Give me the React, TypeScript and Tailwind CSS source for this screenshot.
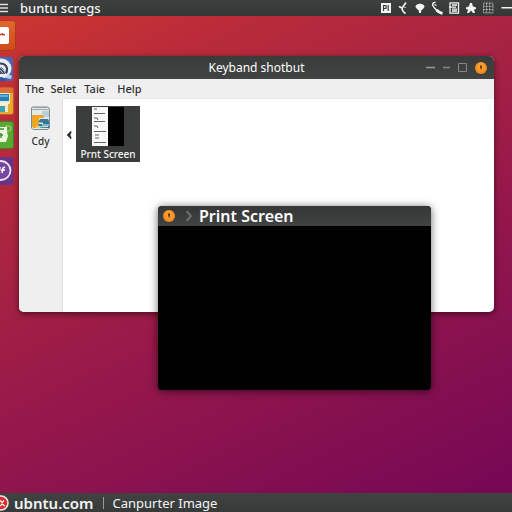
import React from 'react';

function StatusIcons() {
  return (
    <div className="flex items-center gap-[7px] text-gray-100">
      <svg viewBox="0 0 10 10" className="h-[10px] w-[10px]" fill="currentColor">
        <path d="M0 0h10v10H0z" />
        <path d="M2.5 8V2.5h2.5v3H3M7.2 2v6" stroke="#3a3c3b" strokeWidth="1.2" fill="none" />
      </svg>
      <svg viewBox="0 0 10 10" className="h-[10px] w-[10px] overflow-visible" fill="none" stroke="currentColor">
        <path d="M8 -.5 4.5 4.5M1 3.5l3 1.5c0 2 .5 3.500 3.500 5.500" strokeWidth="1.6" />
        <path d="M6 4.500h2" strokeWidth="1" opacity=".6" />
      </svg>
      <svg viewBox="0 0 10 10" className="h-[10px] w-[10px]" fill="currentColor">
        <path d="M.3 3.500Q1 1 3.500 1Q5 .200 6.500 1Q9 1 9.700 3.500Q8.500 6 6.500 7L5.800 10H4.200L3.500 7Q1.500 6 .3 3.500z" />
      </svg>
      <svg viewBox="0 0 10 10" className="h-[10px] w-[10px] overflow-visible" fill="none" stroke="currentColor">
        <path d="M3.500 -.8Q0 -.5 .8 2.500Q2.500 5.500 5 7.500" strokeWidth="1.500" />
        <path d="M4.500 7Q7 9.500 10.500 10.500" strokeWidth="3" />
        <path d="M2.500 1.500l2 1" strokeWidth="1.200" />
      </svg>
      <svg viewBox="0 0 10 10" className="h-[10px] w-[10px] overflow-visible" fill="none" stroke="currentColor">
        <path d="M1 -.2h8.500v10.400H1zM0 4.200h7M3 2h5M3 6.200h5M3 8h5" strokeWidth="1.300" />
      </svg>
      <svg viewBox="0 0 10 10" className="h-[10px] w-[10px]" fill="currentColor">
        <path d="M4 0h2l.8 3.300L10 4.500v1.500L8 6.500 9 10H7L5 7.500 3 10H1l1-3.500L0 6V4.500l3-1.200z" />
      </svg>
      <svg viewBox="0 0 10 10" className="h-[10px] w-[10px] overflow-visible" fill="none" stroke="currentColor" opacity=".6">
        <path d="M.5 0h9.500v10H.5zM.5 3.300H10M.5 6.600H10M3.500 0v10M6.700 0v10" strokeWidth=".9" strokeDasharray="2 .6" />
      </svg>
      <svg viewBox="0 0 12 10" className="h-[10px] w-[12px]" fill="currentColor">
        <path d="M1.500 4H12v1.500H1.500z" />
      </svg>
    </div>
  );
}

function Launcher() {
  return (
    <nav aria-label="Launcher" className="flex w-4 flex-col items-start gap-[6px] pt-1">
      <button aria-label="Files" className="h-[31px] w-4">
        <svg viewBox="0 0 16 31" className="h-full w-full">
          <defs>
            <linearGradient id="files" x2="0" y2="1">
              <stop stopColor="#e2652f" />
              <stop offset="1" stopColor="#cf4c17" />
            </linearGradient>
          </defs>
          <rect x="-16" y=".5" width="31.500" height="30" rx="3" fill="url(#files)" stroke="#a63c1c" />
          <path d="M0 7h7q2 0 2 2v13q0 2-2 2H0z" fill="#fff" />
          <path d="M0 14.500h2.500V13M2 14.800h3" stroke="#d0472b" strokeWidth="1.500" fill="none" />
        </svg>
      </button>
      <button aria-label="Browser" className="h-6 w-[14px]">
        <svg viewBox="0 1 14 24" className="h-full w-full">
          <rect x="-10" y="1" width="23" height="24" rx="2" fill="#4668b4" />
          <circle cx="1.500" cy="12.500" r="10" fill="#e8edf5" />
          <path d="M0 7.500q6 0 7 5 0 3-1 5" fill="none" stroke="#39445a" strokeWidth="2.200" />
          <path d="M0 11q4 0 5 7H0z" fill="#46536b" />
          <path d="M0 14l3 3M0 11l4 4" stroke="#a9b6cb" />
          <path d="M8 18l4 2-1 3-5-1z" fill="#c1d0e8" />
          <path d="M0 21q5 0 7 4H0z" fill="#3155a6" />
        </svg>
      </button>
      <button aria-label="Software" className="h-7 w-[14px]">
        <svg viewBox="0 0 14 28" className="h-full w-full">
          <rect x="-10" y=".5" width="23.500" height="27" rx="2.500" fill="#e7aa2c" stroke="#bd602b" />
          <path d="M0 1h13v5H0z" fill="#de6d35" />
          <path d="M0 6h10v11H8v8H0z" fill="#eee8c9" />
          <path d="M0 7h9v7H0z" fill="#2380b8" />
          <path d="M0 8h8v2H0z" fill="#60b4d5" />
          <path d="M0 16h8v2H0z" fill="#f6f3e2" />
          <path d="M0 19h5v6H0z" fill="#42a4ab" />
        </svg>
      </button>
      <button aria-label="Recycle" className="h-7 w-[14px]">
        <svg viewBox="0 0 14 28" className="h-full w-full">
          <rect x="-10" y=".5" width="23.500" height="27" rx="2.500" fill="#58a832" stroke="#398323" />
          <path d="M0 6h5l2-1v6l1 4-2 6H0z" fill="#edf5df" />
          <path d="M0 8h4M0 14h3M1 12v5" stroke="#448e38" strokeWidth="1.500" fill="none" />
          <path d="M6 5h4q2 2 0 5H7" stroke="#a2d482" fill="none" />
        </svg>
      </button>
      <button aria-label="Messages" className="mt-[2px] h-7 w-[14px]">
        <svg viewBox="0 0 14 28" className="h-full w-full">
          <rect x="-10" width="23.500" height="28" rx="2" fill="#693486" />
          <circle cx="1" cy="13.500" r="9.500" fill="#7746a0" stroke="#eee5f4" strokeWidth="1.800" />
          <path d="M0 10l-1 7M2 16l1-5 2-1M1 13h4" stroke="#fff" strokeWidth="1.500" fill="none" />
        </svg>
      </button>
    </nav>
  );
}

function FolderIcon() {
  return (
    <svg viewBox="0 0 19 24" className="h-6 w-[19px]">
      <path d="M1 1h16l1.500 2v19L17 23.500H2L.5 22V3z" fill="#e3e8e9" stroke="#7e8c91" />
      <path d="M1.500 3.500h16M3 1.500h13" stroke="#87979f" strokeWidth=".8" />
      <path d="M11 5h7v6h-7z" fill="#b7d1dc" />
      <path d="M1 9h11l1 3H8v10H2l-1-2z" fill="#eea622" />
      <path d="M9 13h8l1 2v2H8v-2z" fill="#3c7798" />
      <path d="M7 18h4l1-2h6v6H9z" fill="#2878aa" />
      <path d="M8 17h3l1 2h6M5 21l12-.5" stroke="#e3edcf" strokeWidth="1.200" fill="none" />
    </svg>
  );
}

function Thumbnail() {
  return (
    <svg viewBox="0 0 32 39" className="h-[39px] w-8">
      <path d="M0 0h16v39H0z" fill="#f8f8f8" />
      <path d="M16 0h16v39H16z" fill="#000" />
      <path
        d="M2 2h3M2 6.500h11M2 11h3l1 2M2 14.500h11M2 19h3l1 2M2 24.500h12M3 28h4M3 31h4M2 35.500h12"
        fill="none"
        stroke="#606565"
        strokeWidth="1"
      />
    </svg>
  );
}

function CloseIcon() {
  return (
    <svg viewBox="0 0 12 12" className="h-3 w-3">
      <circle cx="6" cy="6" r="6" fill="#f58b20" />
      <circle cx="6" cy="5" r="4.500" fill="#fb9c2b" />
      <path d="M5 3.500h2v2l-.5 2h-1V6L5 5z" fill="#6a3510" />
    </svg>
  );
}

function FileWindow() {
  return (
    <section className="absolute top-10 right-[18px] left-[19px] flex h-64 flex-col overflow-hidden rounded-[5px] bg-white shadow-[0_2px_6px_rgba(0,0,0,0.5)]">
      <header className="grid h-[23px] shrink-0 grid-cols-[1fr_auto_1fr] items-center bg-linear-to-b from-[#3a3c3b] to-[#414342] px-[7px]">
        <span />
        <h1 className="text-[12px] leading-4 text-white">Keyband shotbut</h1>
        <div className="flex items-center justify-end gap-2">
          <button aria-label="Hide">
            <svg viewBox="0 0 9 9" className="h-[9px] w-[9px]">
              <path d="M0 4.500h9" stroke="#969898" strokeWidth="1.500" />
            </svg>
          </button>
          <button aria-label="Minimize">
            <svg viewBox="0 0 7 9" className="h-[9px] w-[7px]">
              <path d="M0 4.500h7" stroke="#858787" strokeWidth="1.500" />
            </svg>
          </button>
          <button aria-label="Maximize">
            <svg viewBox="0 0 9 9" className="h-[9px] w-[9px]">
              <path d="M.5 .5h8v8h-8z" stroke="#858787" fill="none" />
            </svg>
          </button>
          <button aria-label="Close">
            <CloseIcon />
          </button>
        </div>
      </header>

      <nav className="flex h-[19px] shrink-0 items-center bg-[#efefef] pl-[6px] text-[11px] leading-4 font-medium text-[#303030]">
        <button className="mr-[6px]">The</button>
        <button className="mr-2">Selet</button>
        <button className="mr-3">Taie</button>
        <button>Help</button>
      </nav>

      <div className="flex flex-1">
        <aside className="flex w-11 flex-col items-center border-r border-[#dddddd] bg-[#efefef] pt-2">
          <button className="flex flex-col items-center gap-[3px] text-[10px] leading-4 font-medium text-[#303030]">
            <FolderIcon />
            <span>Cdy</span>
          </button>
        </aside>
        <div className="flex flex-1 items-start border-t border-[#e8e8e8] pt-[7px]">
          <button aria-label="Previous" className="mt-6 ml-[3px]">
            <svg viewBox="0 0 6 10" className="h-[10px] w-[6px]">
              <path d="M5 1L1 5l4 4V7L4 5l1-2z" fill="#333" stroke="#333" strokeWidth=".6" />
            </svg>
          </button>
          <button className="ml-1 flex h-14 w-16 flex-col items-center bg-[#3b3d3c] pt-[1px] text-[10px] leading-4 font-medium text-gray-100">
            <Thumbnail />
            <span>Prnt Screen</span>
          </button>
        </div>
      </div>
    </section>
  );
}

function PrintScreenWindow() {
  return (
    <section className="absolute top-[190px] right-[81px] left-[158px] h-[184px] overflow-hidden rounded-[4px] bg-black shadow-[0_1px_8px_rgba(0,0,0,0.6)]">
      <header className="flex h-5 items-center bg-linear-to-b from-[#353736] to-[#414342] pl-[5px]">
        <button aria-label="Close">
          <CloseIcon />
        </button>
        <svg viewBox="0 0 8 12" className="ml-[10px] h-3 w-2">
          <path d="M1.500 1l4.500 5-4.500 5" fill="none" stroke="#6c6e6e" strokeWidth="2" />
        </svg>
        <h2 className="ml-[6px] text-[16px] leading-5 font-semibold text-white">Print Screen</h2>
      </header>
    </section>
  );
}

export default function App() {
  return (
    <div className="flex min-h-screen flex-col overflow-hidden bg-[linear-gradient(155deg,#cf382e_0%,#b92b3a_18%,#a82441_35%,#98194a_55%,#87114f_75%,#740656_100%)] font-['Noto_Sans',sans-serif]">
      {/* Top bar */}
      <header className="flex h-4 items-center justify-between bg-linear-to-b from-[#3e403f] to-[#353736]">
        <div className="flex items-center gap-[11px]">
          <button aria-label="Menu">
            <svg viewBox="0 0 9 12" className="h-3 w-[9px]">
              <path d="M0 2.500h8M0 6h8M0 9.500h8" stroke="#dedede" strokeWidth="1.300" />
            </svg>
          </button>
          <span className="text-[13px] leading-4 font-medium text-gray-100">buntu scregs</span>
        </div>
        <StatusIcons />
      </header>

      {/* Desktop */}
      <main className="relative flex flex-1">
        <Launcher />
        <FileWindow />
        <PrintScreenWindow />
      </main>

      {/* Bottom bar */}
      <footer className="flex h-[19px] items-center bg-linear-to-b from-[#414342] to-[#383a39] text-gray-100">
        <svg viewBox="0 0 9 16" className="h-4 w-[9px]">
          <circle cx="1" cy="8" r="7" fill="#d92f2d" stroke="#f5eeee" strokeWidth="1.500" />
          <path d="M0 5.500l2 2 2-2M0 11l2-2 3 2" fill="none" stroke="#fff" strokeWidth="1.200" />
        </svg>
        <a href="#" className="ml-[5px] text-[15px] leading-4 font-semibold">
          ubntu.com
        </a>
        <span className="mx-[9px] h-3 w-px bg-[#9a9a9a]" />
        <span className="text-[13px] leading-4">Canpurter Image</span>
      </footer>
    </div>
  );
}
